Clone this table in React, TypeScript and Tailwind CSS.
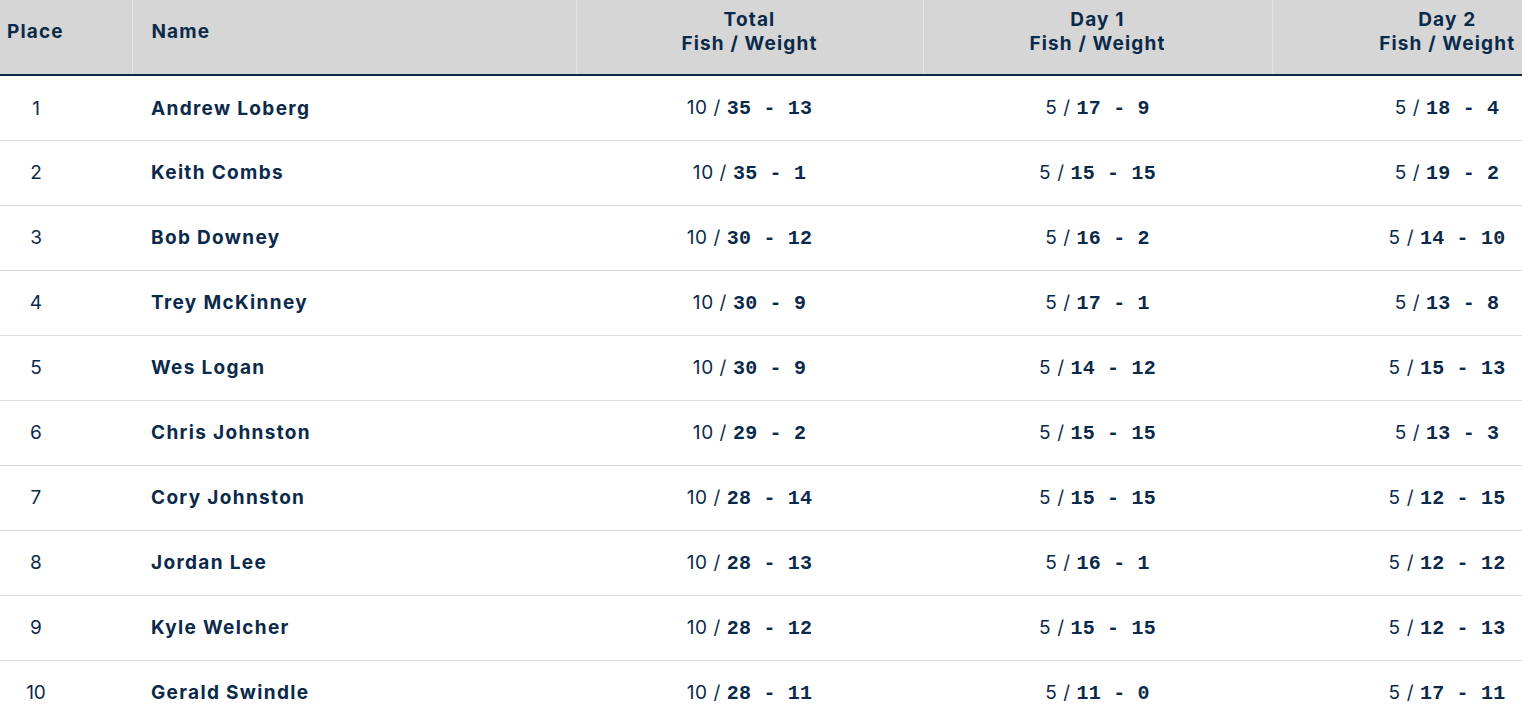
import React from 'react';

type Row = {
  place: number;
  name: string;
  total: [number, number, number];
  day1: [number, number, number];
  day2: [number, number, number];
};

const rows: Row[] = [
  { place: 1, name: 'Andrew Loberg', total: [10, 35, 13], day1: [5, 17, 9], day2: [5, 18, 4] },
  { place: 2, name: 'Keith Combs', total: [10, 35, 1], day1: [5, 15, 15], day2: [5, 19, 2] },
  { place: 3, name: 'Bob Downey', total: [10, 30, 12], day1: [5, 16, 2], day2: [5, 14, 10] },
  { place: 4, name: 'Trey McKinney', total: [10, 30, 9], day1: [5, 17, 1], day2: [5, 13, 8] },
  { place: 5, name: 'Wes Logan', total: [10, 30, 9], day1: [5, 14, 12], day2: [5, 15, 13] },
  { place: 6, name: 'Chris Johnston', total: [10, 29, 2], day1: [5, 15, 15], day2: [5, 13, 3] },
  { place: 7, name: 'Cory Johnston', total: [10, 28, 14], day1: [5, 15, 15], day2: [5, 12, 15] },
  { place: 8, name: 'Jordan Lee', total: [10, 28, 13], day1: [5, 16, 1], day2: [5, 12, 12] },
  { place: 9, name: 'Kyle Welcher', total: [10, 28, 12], day1: [5, 15, 15], day2: [5, 12, 13] },
  { place: 10, name: 'Gerald Swindle', total: [10, 28, 11], day1: [5, 11, 0], day2: [5, 17, 11] },
];

const sans = "font-['Inter',_'Open_Sans',_sans-serif]";

// fish count / lbs - oz
const Catch = ({ value }: { value: [number, number, number] }) => (
  <span className="whitespace-pre">
    <span className="text-[19px] tracking-[0.03em]">{value[0]} / </span>
    <span className="font-['Liberation_Mono',_monospace] text-[20px] font-bold tracking-[0.01em]">
      {`${value[1]} - ${value[2]}`}
    </span>
  </span>
);

export default function App() {
  return (
    <div className={`w-full overflow-hidden bg-white text-[#0b2a4a] ${sans}`}>
      <table className="w-[1622px] table-fixed border-collapse">
        <colgroup>
          <col className="w-[132px]" />
          <col className="w-[444px]" />
          <col className="w-[347px]" />
          <col className="w-[349px]" />
          <col className="w-[350px]" />
        </colgroup>
        <thead>
          <tr className="h-[75px] border-b-2 border-[#0b2a4a] bg-[#d6d6d6] text-[19px] font-extrabold leading-[24px] tracking-[0.06em]">
            <th className="pb-[10px] pl-[7px] text-left align-middle">Place</th>
            <th className="border-l border-[#e4e4e4] pb-[10px] pl-[19px] text-left align-middle">Name</th>
            <th className="border-l border-[#e4e4e4] pb-[10px] text-center align-middle">
              Total
              <br />
              Fish / Weight
            </th>
            <th className="border-l border-[#e4e4e4] pb-[10px] text-center align-middle">
              Day 1
              <br />
              Fish / Weight
            </th>
            <th className="border-l border-[#e4e4e4] pb-[10px] text-center align-middle">
              Day 2
              <br />
              Fish / Weight
            </th>
          </tr>
        </thead>
        <tbody>
          {rows.map((r) => (
            <tr key={r.place} className="h-[65px] border-b border-[#dadada]">
              <td className="pt-[2px] align-middle">
                <span className="inline-block w-[72px] text-center text-[19px]">{r.place}</span>
              </td>
              <td className="pl-[19px] pt-[2px] align-middle text-[19px] font-bold tracking-[0.07em]">{r.name}</td>
              <td className="pt-[2px] text-center align-middle">
                <Catch value={r.total} />
              </td>
              <td className="pt-[2px] text-center align-middle">
                <Catch value={r.day1} />
              </td>
              <td className="pt-[2px] text-center align-middle">
                <Catch value={r.day2} />
              </td>
            </tr>
          ))}
        </tbody>
      </table>
    </div>
  );
}
